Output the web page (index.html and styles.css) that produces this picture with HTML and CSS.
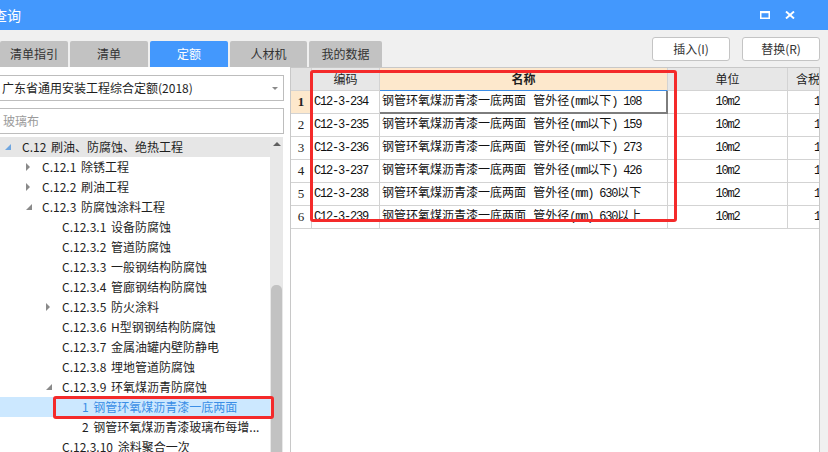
FILE: index.html
```html
<!DOCTYPE html>
<html lang="zh-CN">
<head>
<meta charset="utf-8">
<title>查询</title>
<link rel="stylesheet" href="styles.css">
</head>
<body>
<div class="window">
  <header class="titlebar">
    <span class="title">查询</span>
    <div class="win-btns">
      <svg class="ic" width="10" height="8" viewBox="0 0 10 8"><rect x="0.75" y="1" width="8.5" height="6.25" fill="none" stroke="#fff" stroke-width="1.5"/><rect x="0" y="0" width="10" height="2.2" fill="#fff"/></svg>
      <svg class="ic" width="10" height="8" viewBox="0 0 10 8"><path d="M1 0.5L9 7.5M9 0.5L1 7.5" stroke="#fff" stroke-width="1.9"/></svg>
    </div>
  </header>

  <div class="toolbar">
    <nav class="tabs">
      <div class="tab">清单指引</div>
      <div class="tab">清单</div>
      <div class="tab active">定额</div>
      <div class="tab">人材机</div>
      <div class="tab">我的数据</div>
    </nav>
    <div class="actions">
      <button class="btn">插入(I)</button>
      <button class="btn">替换(R)</button>
    </div>
  </div>

  <div class="main">
    <aside class="left">
      <div class="select">广东省通用安装工程综合定额(2018)<span class="caret"></span></div>
      <div class="search">玻璃布</div>
      <div class="tree">
        <ul class="tree-list">
          <li class="node l0 hover"><span class="tw exp blue"></span>C.12 刷油、防腐蚀、绝热工程</li>
          <li class="node l1"><span class="tw col"></span>C.12.1 除锈工程</li>
          <li class="node l1"><span class="tw col"></span>C.12.2 刷油工程</li>
          <li class="node l1"><span class="tw exp"></span>C.12.3 防腐蚀涂料工程</li>
          <li class="node l2"><span class="tw"></span>C.12.3.1 设备防腐蚀</li>
          <li class="node l2"><span class="tw"></span>C.12.3.2 管道防腐蚀</li>
          <li class="node l2"><span class="tw"></span>C.12.3.3 一般钢结构防腐蚀</li>
          <li class="node l2"><span class="tw"></span>C.12.3.4 管廊钢结构防腐蚀</li>
          <li class="node l2"><span class="tw col"></span>C.12.3.5 防火涂料</li>
          <li class="node l2"><span class="tw"></span>C.12.3.6 H型钢钢结构防腐蚀</li>
          <li class="node l2"><span class="tw"></span>C.12.3.7 金属油罐内壁防静电</li>
          <li class="node l2"><span class="tw"></span>C.12.3.8 埋地管道防腐蚀</li>
          <li class="node l2"><span class="tw exp"></span>C.12.3.9 环氧煤沥青防腐蚀</li>
          <li class="node l3 selected"><span class="tw"></span>1 钢管环氧煤沥青漆一底两面</li>
          <li class="node l3"><span class="tw"></span>2 钢管环氧煤沥青漆玻璃布每增...</li>
          <li class="node l2"><span class="tw"></span>C.12.3.10 涂料聚合一次</li>
        </ul>
        <div class="vscroll"><span class="up"></span><span class="thumb"></span></div>
      </div>
    </aside>

    <section class="right">
      <div class="grid">
        <div class="grow head">
          <div class="c rh corner"></div>
          <div class="c hc">编码</div>
          <div class="c hc hname">名称</div>
          <div class="c hc">单位</div>
          <div class="c hc htax">含税单价</div>
        </div>
        <div class="grow">
          <div class="c rh cur">1</div>
          <div class="c code">C12-3-234</div>
          <div class="c name focus">钢管环氧煤沥青漆一底两面 管外径<span class="lat">(mm</span>以下<span class="lat">) 108</span></div>
          <div class="c unit">10m2</div>
          <div class="c tax">1</div>
        </div>
        <div class="grow">
          <div class="c rh">2</div>
          <div class="c code">C12-3-235</div>
          <div class="c name">钢管环氧煤沥青漆一底两面 管外径<span class="lat">(mm</span>以下<span class="lat">) 159</span></div>
          <div class="c unit">10m2</div>
          <div class="c tax">1</div>
        </div>
        <div class="grow">
          <div class="c rh">3</div>
          <div class="c code">C12-3-236</div>
          <div class="c name">钢管环氧煤沥青漆一底两面 管外径<span class="lat">(mm</span>以下<span class="lat">) 273</span></div>
          <div class="c unit">10m2</div>
          <div class="c tax">1</div>
        </div>
        <div class="grow">
          <div class="c rh">4</div>
          <div class="c code">C12-3-237</div>
          <div class="c name">钢管环氧煤沥青漆一底两面 管外径<span class="lat">(mm</span>以下<span class="lat">) 426</span></div>
          <div class="c unit">10m2</div>
          <div class="c tax">1</div>
        </div>
        <div class="grow">
          <div class="c rh">5</div>
          <div class="c code">C12-3-238</div>
          <div class="c name">钢管环氧煤沥青漆一底两面 管外径<span class="lat">(mm) 630</span>以下</div>
          <div class="c unit">10m2</div>
          <div class="c tax">1</div>
        </div>
        <div class="grow">
          <div class="c rh">6</div>
          <div class="c code">C12-3-239</div>
          <div class="c name">钢管环氧煤沥青漆一底两面 管外径<span class="lat">(mm) 630</span>以上</div>
          <div class="c unit">10m2</div>
          <div class="c tax">1</div>
        </div>
      </div>
    </section>
  </div>

  <div class="mark mark-grid"></div>
  <div class="mark mark-tree"></div>
</div>
</body>
</html>
```

FILE: styles.css
```css
* { box-sizing: border-box; }

html, body {
  margin: 0;
  padding: 0;
}

body {
  width: 828px;
  height: 452px;
  overflow: hidden;
  background: #f0f0f0;
  font-family: "Noto Sans CJK SC", "Microsoft YaHei", sans-serif;
  font-size: 12px;
  color: #1e1e1e;
}

.window {
  position: relative;
  width: 828px;
  height: 452px;
  display: flex;
  flex-direction: column;
}

/* title bar */
.titlebar {
  height: 30px;
  flex: none;
  background: #4398fd;
  color: #fff;
  display: flex;
  align-items: center;
  justify-content: space-between;
}

.title {
  margin-left: -7px;
  font-size: 14px;
  line-height: 30px;
}

.win-btns {
  display: flex;
  align-items: center;
  gap: 15px;
  margin-right: 33px;
}

.ic { display: block; }

/* toolbar */
.toolbar {
  height: 37px;
  flex: none;
  display: flex;
  justify-content: space-between;
  padding-right: 8px;
}

.tabs {
  display: flex;
  align-items: flex-end;
  gap: 2px;
}

.tab {
  height: 26px;
  background: #c2c2c2;
  color: #333;
  border-radius: 2px 2px 0 0;
  line-height: 26px;
  text-align: center;
  font-size: 12px;
}

.tab:nth-child(1) { width: 68px; }
.tab:nth-child(2) { width: 78px; }
.tab:nth-child(3) { width: 78px; }
.tab:nth-child(4) { width: 77px; }
.tab:nth-child(5) { width: 73px; }

.tab.active {
  background: #4398fd;
  color: #fff;
}

.actions {
  display: flex;
  gap: 12px;
  margin-top: 7px;
  align-self: flex-start;
}

.btn {
  width: 78px;
  height: 24px;
  background: #fff;
  border: 1px solid #c4c4c4;
  border-radius: 3px;
  font-family: "Noto Sans CJK SC", sans-serif;
  font-size: 12px;
  color: #333;
  padding: 0;
  line-height: 22px;
}

/* main */
.main {
  flex: 1;
  display: flex;
  min-height: 0;
}

.left {
  width: 290px;
  flex: none;
  background: #fff;
  padding-top: 8px;
  display: flex;
  flex-direction: column;
}

.select,
.search {
  margin-left: -1px;
  width: 285px;
  height: 26px;
  border: 1px solid #bdbdbd;
  background: #fff;
  line-height: 24px;
  padding-left: 2px;
  display: flex;
  align-items: center;
  flex: none;
}

.select { color: #1e1e1e; }

.caret {
  margin-left: auto;
  margin-right: 5px;
  width: 0;
  height: 0;
  border-left: 3px solid transparent;
  border-right: 3px solid transparent;
  border-top: 3px solid #8a8a8a;
}

.search {
  margin-top: 7px;
  color: #9a9a9a;
  padding-left: 3px;
}

.tree {
  margin-top: 3px;
  flex: 1;
  display: flex;
  min-height: 0;
  padding-right: 7px;
}

.tree-list {
  list-style: none;
  margin: 0;
  padding: 0;
  width: 270px;
  overflow: hidden;
}

.node {
  height: 20px;
  display: flex;
  align-items: center;
  white-space: nowrap;
  line-height: 20px;
  color: #1e1e1e;
  word-spacing: 2px;
}

.node.l0 { padding-left: 4px; }
.node.l1 { padding-left: 24px; }
.node.l2 { padding-left: 44px; }
.node.l3 { padding-left: 64px; }

.node.hover { background: #e6e6e6; }
.node.selected { background: #cce8ff; color: #3a8ee6; }

.tw {
  width: 18px;
  height: 20px;
  flex: none;
  position: relative;
}

.tw.exp::before {
  content: "";
  position: absolute;
  left: 2px;
  top: 7px;
  width: 0;
  height: 0;
  border-left: 6px solid transparent;
  border-bottom: 6px solid #8a8a8a;
}

.tw.exp.blue::before { border-bottom-color: #6fa6e0; left: 1px; }

.tw.col::before {
  content: "";
  position: absolute;
  left: 2px;
  top: 6px;
  width: 0;
  height: 0;
  border-top: 4px solid transparent;
  border-bottom: 4px solid transparent;
  border-left: 4px solid #8a8a8a;
}

.vscroll {
  width: 13px;
  flex: none;
  background: #e8e8e8;
  position: relative;
  display: flex;
  flex-direction: column;
  align-items: center;
}

.up {
  margin-top: 5px;
  width: 0;
  height: 0;
  border-left: 4px solid transparent;
  border-right: 4px solid transparent;
  border-bottom: 4px solid #606060;
}

.thumb {
  margin-top: 139px;
  width: 11px;
  flex: 1;
  background: #c2c2c2;
  border-radius: 5px 5px 0 0;
}

/* right grid */
.right {
  flex: 1;
  padding-right: 8px;
  display: flex;
  min-width: 0;
}

.grid {
  flex: 1;
  background: #fff;
  border: 1px solid #c8c8c8;
  border-bottom: none;
  overflow: hidden;
}

.grow {
  display: grid;
  grid-template-columns: 21px 68px 288px 120px 90px;
  width: max-content;
  height: 23px;
}

.c {
  border-right: 1px solid #d3d3d3;
  border-bottom: 1px solid #d3d3d3;
  height: 23px;
  line-height: 22px;
  white-space: nowrap;
  overflow: hidden;
}

.head .c {
  background: #e7e7e7;
  font-family: "Noto Sans CJK SC", sans-serif;
  font-size: 12px;
  color: #1e1e1e;
  text-align: center;
}

.head .corner { background: #e2e2e2; }

.head .hname {
  background: #fde8cc;
  font-weight: bold;
  border-bottom-color: #3c8ee8;
}

.head .htax {
  text-align: left;
  padding-left: 8px;
}

.rh {
  text-align: center;
  font-family: "Liberation Serif", serif;
  font-size: 13px;
  color: #222;
}

.rh.cur {
  background: #fde8cc;
  font-weight: bold;
  border-right-color: #3c8ee8;
}

.code,
.name,
.unit,
.tax {
  font-family: "Liberation Mono", "Noto Sans CJK SC", monospace;
  font-size: 12px;
  color: #111;
}

.code {
  padding-left: 2px;
  letter-spacing: -1.2px;
}

.name { padding-left: 2px; }

.lat { letter-spacing: -1.2px; }

.name.focus {
  border-right: 2px solid #7d7d7d;
  border-bottom: 2px solid #7d7d7d;
}

.unit {
  text-align: center;
  letter-spacing: -1.2px;
}

.tax {
  padding-left: 26px;
  letter-spacing: -1.2px;
}

/* red annotation frames laid over the content */
.mark {
  position: absolute;
  border: 3px solid #f42a2a;
  border-radius: 3px;
  pointer-events: none;
}

.mark-grid {
  left: 310px;
  top: 70px;
  width: 367px;
  height: 152px;
}

.mark-tree {
  left: 53px;
  top: 396px;
  width: 221px;
  height: 23px;
}
```
